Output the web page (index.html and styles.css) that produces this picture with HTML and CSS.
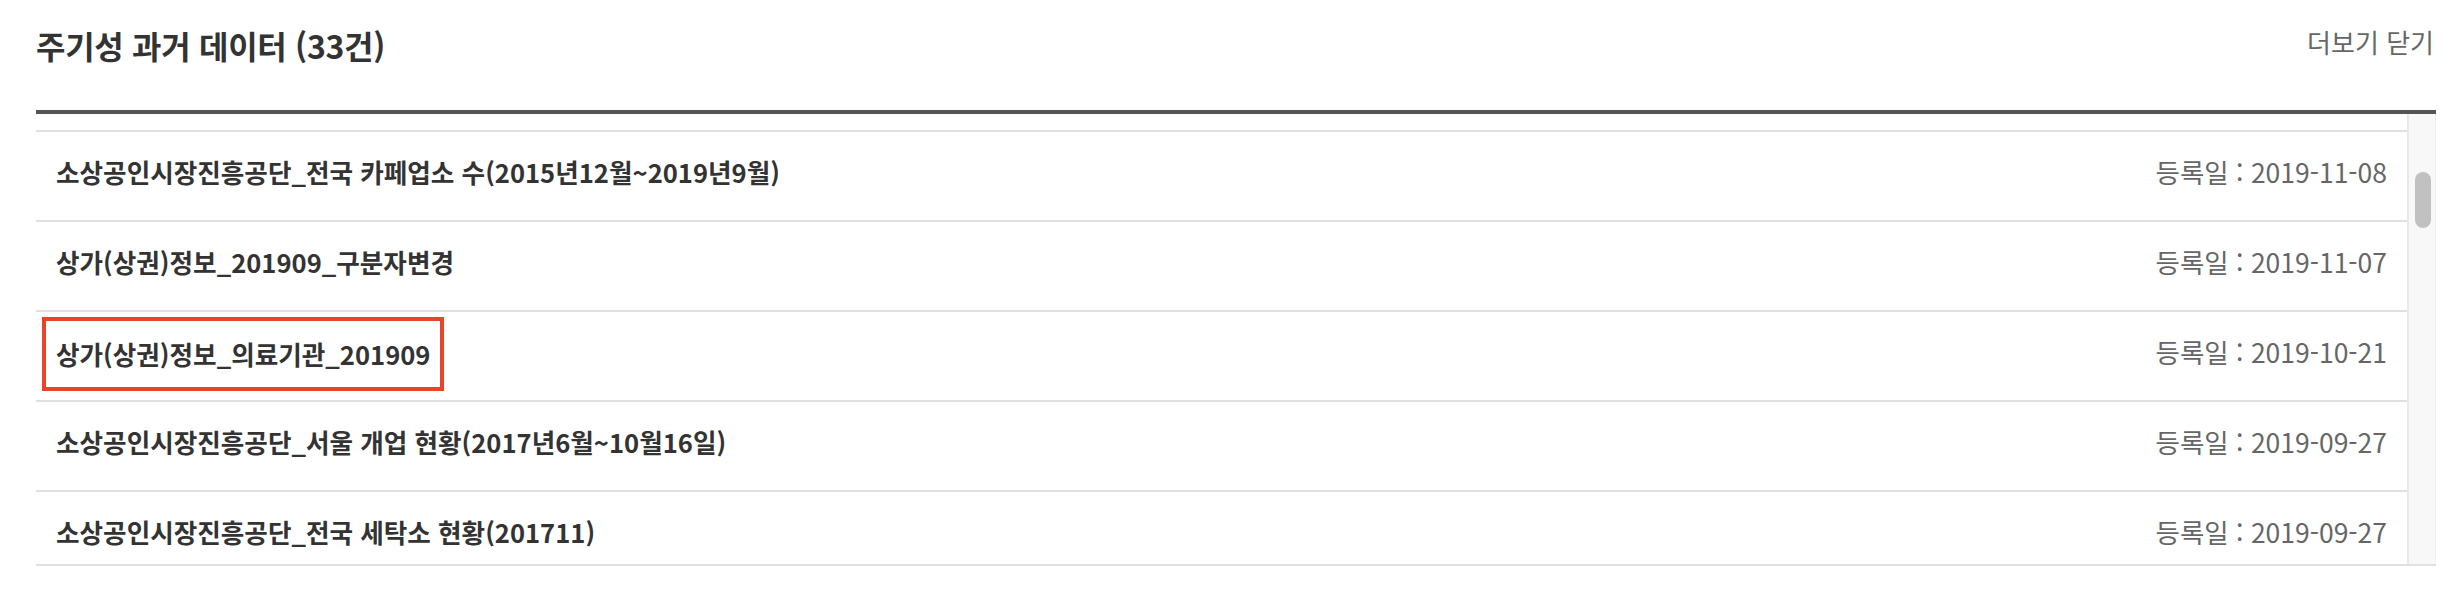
FILE: index.html
```html
<!DOCTYPE html>
<html lang="ko">
<head>
<meta charset="utf-8">
<title>주기성 과거 데이터</title>
<link rel="stylesheet" href="styles.css">
</head>
<body>
<section class="panel">
  <header class="panel-head">
    <h2 class="panel-title">주기성 과거 데이터 (33건)</h2>
    <a class="panel-more" href="#">더보기 닫기</a>
  </header>
  <div class="list-box">
    <ul class="list">
      <li class="row"><span class="row-title">소상공인시장진흥공단_전국 카페업소 수(2015년12월~2019년9월)</span><span class="row-date">등록일 : 2019-11-08</span></li>
      <li class="row"><span class="row-title">상가(상권)정보_201909_구분자변경</span><span class="row-date">등록일 : 2019-11-07</span></li>
      <li class="row"><span class="row-title is-marked">상가(상권)정보_의료기관_201909</span><span class="row-date">등록일 : 2019-10-21</span></li>
      <li class="row"><span class="row-title">소상공인시장진흥공단_서울 개업 현황(2017년6월~10월16일)</span><span class="row-date">등록일 : 2019-09-27</span></li>
      <li class="row"><span class="row-title">소상공인시장진흥공단_전국 세탁소 현황(201711)</span><span class="row-date">등록일 : 2019-09-27</span></li>
    </ul>
    <div class="scroll-track"><div class="scroll-thumb"></div></div>
  </div>
</section>
</body>
</html>
```

FILE: styles.css
```css
* { box-sizing: border-box; }

html, body {
  margin: 0;
  padding: 0;
  background: #ffffff;
}

body {
  font-family: "Noto Sans CJK KR", "Noto Sans", sans-serif;
  color: #333333;
}

.panel {
  padding: 0 24px 0 36px;
}

.panel-head {
  display: flex;
  justify-content: space-between;
  align-items: flex-start;
  height: 110px;
  padding-top: 25px;
}

.panel-title {
  margin: 0;
  font-size: 32px;
  line-height: 40px;
  font-weight: 700;
  letter-spacing: -0.3px;
  color: #333333;
}

.panel-more {
  font-size: 26px;
  line-height: 34px;
  color: #666666;
  text-decoration: none;
  margin-right: 2px;
}

.list-box {
  display: flex;
  border-top: 4px solid #555555;
  border-bottom: 2px solid #e0e0e0;
  height: 456px;
}

.list {
  flex: 1;
  margin: 0;
  padding: 16px 0 0;
  list-style: none;
  overflow: hidden;
}

.row {
  display: flex;
  justify-content: space-between;
  align-items: center;
  height: 90px;
  flex-shrink: 0;
  border-top: 2px solid #e0e0e0;
  padding: 0 20px 8px 20px;
}

.row-title {
  font-size: 25.6px;
  line-height: 36px;
  font-weight: 700;
  color: #333333;
}

.row-title.is-marked {
  border: 4px solid #e9432b;
  padding: 15px 10px 15px 10px;
  margin-left: -14px;
  margin-top: 3px;
}

.row-date {
  font-size: 26.5px;
  line-height: 36px;
  color: #666666;
}

.scroll-track {
  width: 29px;
  flex-shrink: 0;
  background: #f8f8f8;
  border-left: 2px solid #e8e8e8;
  border-right: 1px solid #efefef;
  padding: 58px 0 0 6px;
}

.scroll-thumb {
  width: 16px;
  height: 56px;
  border-radius: 8px;
  background: #c1c1c1;
}
```
